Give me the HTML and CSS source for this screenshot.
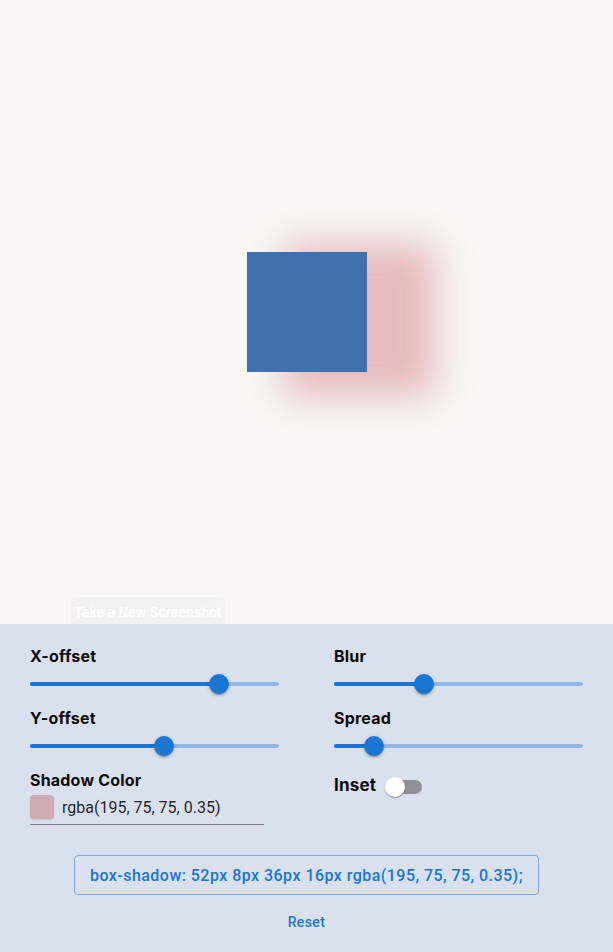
FILE: index.html
```html
<!DOCTYPE html>
<html>
<head>
<meta charset="utf-8">
<link rel="stylesheet" href="styles.css">
</head>
<body>
<div class="stage">
  <div class="box"></div>
  <button class="shot-btn">Take a New Screenshot</button>
</div>
<div class="panel">
  <div class="grid">
    <div class="col">
      <div class="label">X-offset</div>
      <div class="slider"><div class="rail"></div><div class="fill" style="width:76%"></div><div class="thumb" style="left:76%"></div></div>
      <div class="label">Y-offset</div>
      <div class="slider"><div class="rail"></div><div class="fill" style="width:54%"></div><div class="thumb" style="left:54%"></div></div>
      <div class="label">Shadow Color</div>
      <div class="color-input">
        <span class="swatch"></span>
        <span class="color-text">rgba(195, 75, 75, 0.35)</span>
      </div>
    </div>
    <div class="col">
      <div class="label">Blur</div>
      <div class="slider"><div class="rail"></div><div class="fill" style="width:36%"></div><div class="thumb" style="left:36%"></div></div>
      <div class="label">Spread</div>
      <div class="slider"><div class="rail"></div><div class="fill" style="width:16%"></div><div class="thumb" style="left:16%"></div></div>
      <div class="inset-row">
        <span class="label inset-label">Inset</span>
        <span class="switch"><span class="switch-track"></span><span class="switch-thumb"></span></span>
      </div>
    </div>
  </div>
  <div class="code-wrap">
    <div class="code">box-shadow: 52px 8px 36px 16px rgba(195, 75, 75, 0.35);</div>
  </div>
  <div class="reset-wrap">
    <button class="reset">Reset</button>
  </div>
</div>
</body>
</html>
```
FILE: styles.css
```css
* { box-sizing: border-box; }
html, body { margin: 0; padding: 0; }
body {
  background: #f9f7f7;
  font-family: Roboto, "Liberation Sans", sans-serif;
  width: 613px;
  height: 952px;
  overflow: hidden;
}
.stage {
  position: relative;
  height: 624px;
  display: flex;
  align-items: center;
  justify-content: center;
}
.box {
  width: 120px;
  height: 120px;
  background: #3e71ae;
  box-shadow: 52px 8px 36px 16px rgba(195, 75, 75, 0.35);
}
.shot-btn {
  position: absolute;
  left: 71px;
  top: 597px;
  width: 154px;
  height: 30px;
  border: none;
  border-radius: 4px;
  background: #f3f2f2;
  color: #ffffff;
  font-family: Inter, "Open Sans", sans-serif;
  font-weight: 600;
  font-size: 13px;
  white-space: nowrap;
  padding: 0;
  margin: 0;
}
.panel {
  position: relative;
  z-index: 1;
  height: 328px;
  background: #dae1ee;
  padding: 20px 30px 12px;
}
.grid {
  display: grid;
  grid-template-columns: 249px 249px;
  column-gap: 55px;
}
.col {
  display: flex;
  flex-direction: column;
}
.label {
  font-family: Inter, "Open Sans", sans-serif;
  font-weight: 700;
  font-size: 16px;
  line-height: 24px;
  height: 24px;
  color: #0a0a0a;
  letter-spacing: 0.2px;
}
.slider {
  position: relative;
  height: 32px;
  margin-bottom: 6px;
}
.rail, .fill {
  position: absolute;
  top: 14px;
  left: 0;
  height: 4px;
  border-radius: 2px;
}
.rail {
  width: 100%;
  background: #91b8e3;
}
.fill {
  background: #1976d2;
}
.thumb {
  position: absolute;
  top: 6px;
  width: 20px;
  height: 20px;
  margin-left: -10px;
  border-radius: 50%;
  background: #1976d2;
  box-shadow: 0 3px 1px -2px rgba(0,0,0,.2), 0 2px 2px 0 rgba(0,0,0,.14), 0 1px 5px 0 rgba(0,0,0,.12);
}
.color-input {
  width: 234px;
  height: 33px;
  display: flex;
  align-items: center;
  gap: 8px;
  border-bottom: 1px solid rgba(0,0,0,0.42);
  padding-bottom: 2px;
}
.swatch {
  width: 24px;
  height: 24px;
  border-radius: 4px;
  background: #d2acb5;
  box-shadow: 0 1px 2px rgba(0,0,0,0.15);
}
.color-text {
  font-size: 16px;
  color: rgba(0,0,0,0.87);
}
.inset-row {
  display: flex;
  align-items: center;
  height: 34px;
  gap: 9px;
}
.inset-label {
  font-size: 17px;
  height: auto;
}
.switch {
  position: relative;
  width: 37px;
  height: 20px;
  margin-top: 3px;
}
.switch-track {
  position: absolute;
  left: 2px;
  top: 3px;
  width: 35px;
  height: 14px;
  border-radius: 7px;
  background: #8d9096;
}
.switch-thumb {
  position: absolute;
  left: 0;
  top: 0;
  width: 20px;
  height: 20px;
  border-radius: 50%;
  background: #ffffff;
  box-shadow: 0 2px 1px -1px rgba(0,0,0,.2), 0 1px 1px 0 rgba(0,0,0,.14), 0 1px 3px 0 rgba(0,0,0,.12);
}
.code-wrap {
  display: flex;
  justify-content: center;
  margin-top: 30px;
}
.code {
  height: 40px;
  border: 1px solid #7aabe0;
  border-radius: 4px;
  padding: 0 15px;
  display: flex;
  align-items: center;
  color: #1976d2;
  font-size: 16px;
  font-weight: 500;
  letter-spacing: 0.02857em;
}
.reset-wrap {
  display: flex;
  justify-content: center;
  margin-top: 9px;
}
.reset {
  height: 36px;
  padding: 6px 8px;
  border: none;
  background: transparent;
  color: #1976d2;
  font-family: Roboto, sans-serif;
  font-weight: 500;
  font-size: 14px;
  letter-spacing: 0.02857em;
}
```
